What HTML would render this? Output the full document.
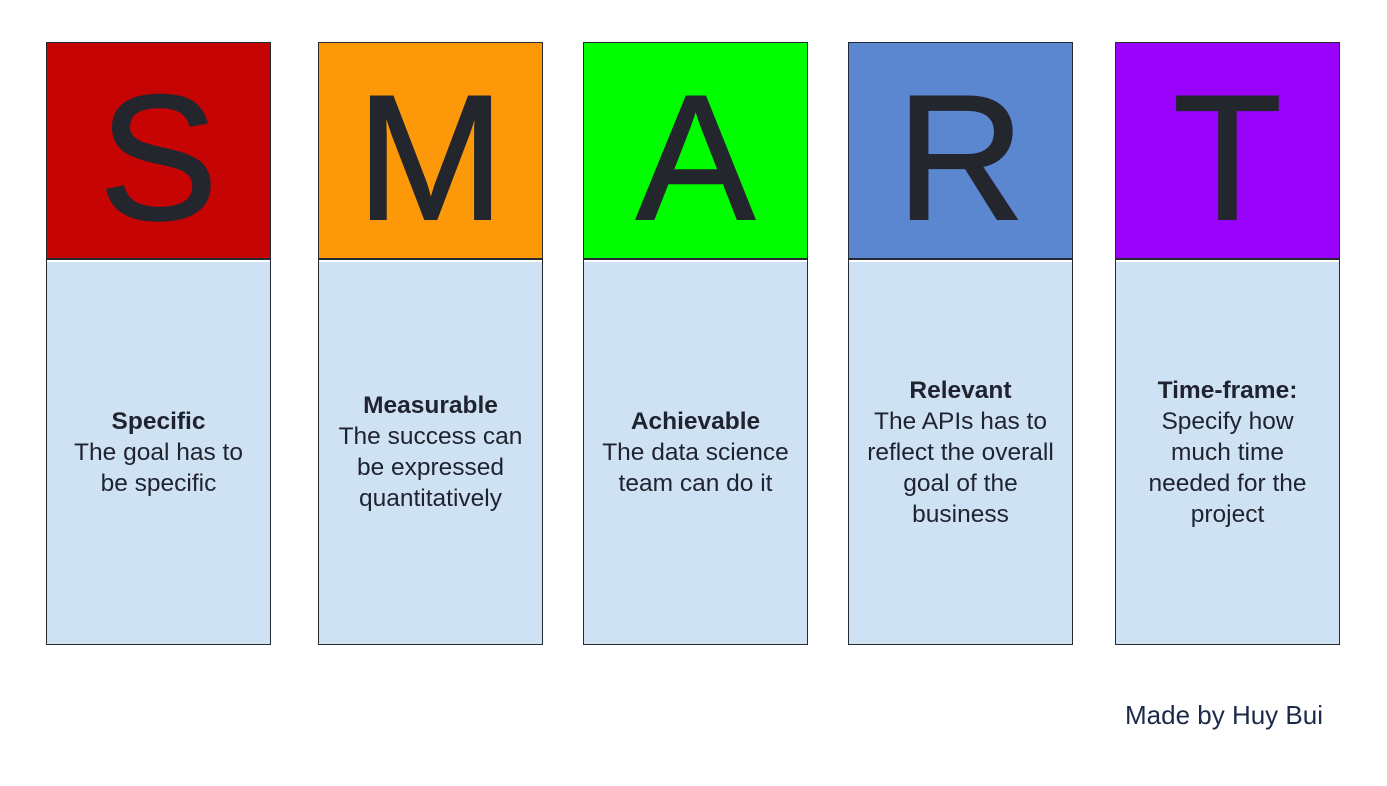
<!DOCTYPE html>
<html><head><meta charset="utf-8"><style>
body{margin:0;width:1387px;height:786px;background:#fff;position:relative;overflow:hidden;font-family:"Liberation Sans",Arimo,Arial,Helvetica,sans-serif}
.col{position:absolute;top:42px;width:225px;height:603px;border:1.5px solid #252a33;box-sizing:border-box}
.top{position:absolute;left:0;top:0;right:0;height:217px;border-bottom:2px solid #252a33;display:flex;align-items:center;justify-content:center;font-size:178px;color:#24262d;line-height:1;padding-top:14px;box-sizing:border-box;-webkit-text-stroke:2px #24262d}
.bot{position:absolute;left:0;right:0;top:219px;bottom:0;background:#cfe2f3;display:flex;align-items:center;justify-content:center;text-align:center;font-size:24.5px;line-height:31px;color:#1f2330;padding-bottom:2px;white-space:nowrap}
b{font-weight:bold}
.made{position:absolute;left:1125px;top:700px;font-size:26px;color:#1c2a4a;white-space:nowrap}
</style></head><body>
<div class="col" style="left:46px"><div class="top" style="background:#c60404">S</div><div class="bot"><div><b>Specific</b><br>The goal has to<br>be specific</div></div></div>
<div class="col" style="left:318px"><div class="top" style="background:#fd9909">M</div><div class="bot"><div><b>Measurable</b><br>The success can<br>be expressed<br>quantitatively</div></div></div>
<div class="col" style="left:583px"><div class="top" style="background:#00fe00">A</div><div class="bot"><div><b>Achievable</b><br>The data science<br>team can do it</div></div></div>
<div class="col" style="left:848px"><div class="top" style="background:#5b87d1">R</div><div class="bot"><div><b>Relevant</b><br>The APIs has to<br>reflect the overall<br>goal of the<br>business</div></div></div>
<div class="col" style="left:1115px"><div class="top" style="background:#9903fc">T</div><div class="bot"><div><b>Time-frame:</b><br>Specify how<br>much time<br>needed for the<br>project</div></div></div>
<div class="made">Made by Huy Bui</div>
</body></html>
